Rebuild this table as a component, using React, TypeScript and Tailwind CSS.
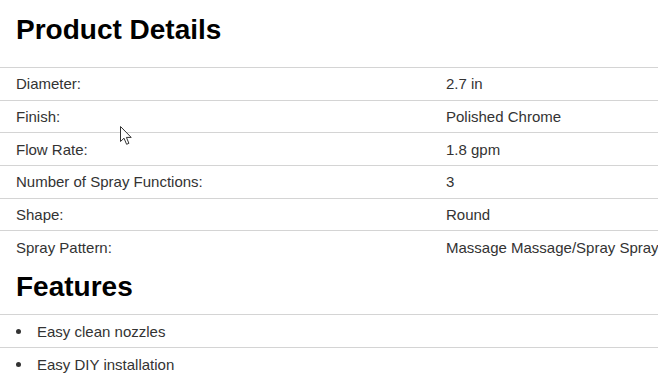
import React from "react";

const rows: [string, string][] = [
  ["Diameter:", "2.7 in"],
  ["Finish:", "Polished Chrome"],
  ["Flow Rate:", "1.8 gpm"],
  ["Number of Spray Functions:", "3"],
  ["Shape:", "Round"],
  ["Spray Pattern:", "Massage Massage/Spray Spray"],
];

const features = ["Easy clean nozzles", "Easy DIY installation"];

export default function App() {
  return (
    <div
      className="relative w-[658px] h-[386px] overflow-hidden bg-white text-[#333]"
      style={{ fontFamily: '"Liberation Sans", Arial, sans-serif' }}
    >
      <h1 className="pl-4 pt-[13.5px] mb-[21.3px] text-[28px] leading-[32.2px] font-bold text-black">
        Product Details
      </h1>
      <div className="flex flex-col">
        {rows.map(([k, v]) => (
          <div
            key={k}
            className="grid grid-cols-[430px_1fr] h-[32.67px] border-t border-[#d4d4d4] items-center text-[15px] leading-[17px] whitespace-nowrap"
          >
            <div className="pl-4">{k}</div>
            <div className="pl-4">{v}</div>
          </div>
        ))}
      </div>
      <h2 className="pl-4 mt-[8px] mb-[11px] text-[28px] leading-[32.2px] font-bold text-black">
        Features
      </h2>
      <ul className="flex flex-col">
        {features.map((f) => (
          <li
            key={f}
            className="flex items-center h-[33px] border-t border-[#d4d4d4] text-[15px] leading-[17px]"
          >
            <span className="ml-4 w-[5px] h-[5px] rounded-full bg-[#333]" />
            <span className="ml-[16px]">{f}</span>
          </li>
        ))}
      </ul>
      <svg
        className="absolute left-[120px] top-[126px]"
        width="13"
        height="20"
        viewBox="0 0 13 20"
      >
        <path
          d="M0.5 0.5 L0.5 15.5 L4 12.2 L6.6 18.3 L8.9 17.3 L6.4 11.4 L11.2 11.4 Z"
          fill="#fff"
          stroke="#333"
          strokeWidth="1"
          strokeLinejoin="round"
        />
      </svg>
    </div>
  );
}
